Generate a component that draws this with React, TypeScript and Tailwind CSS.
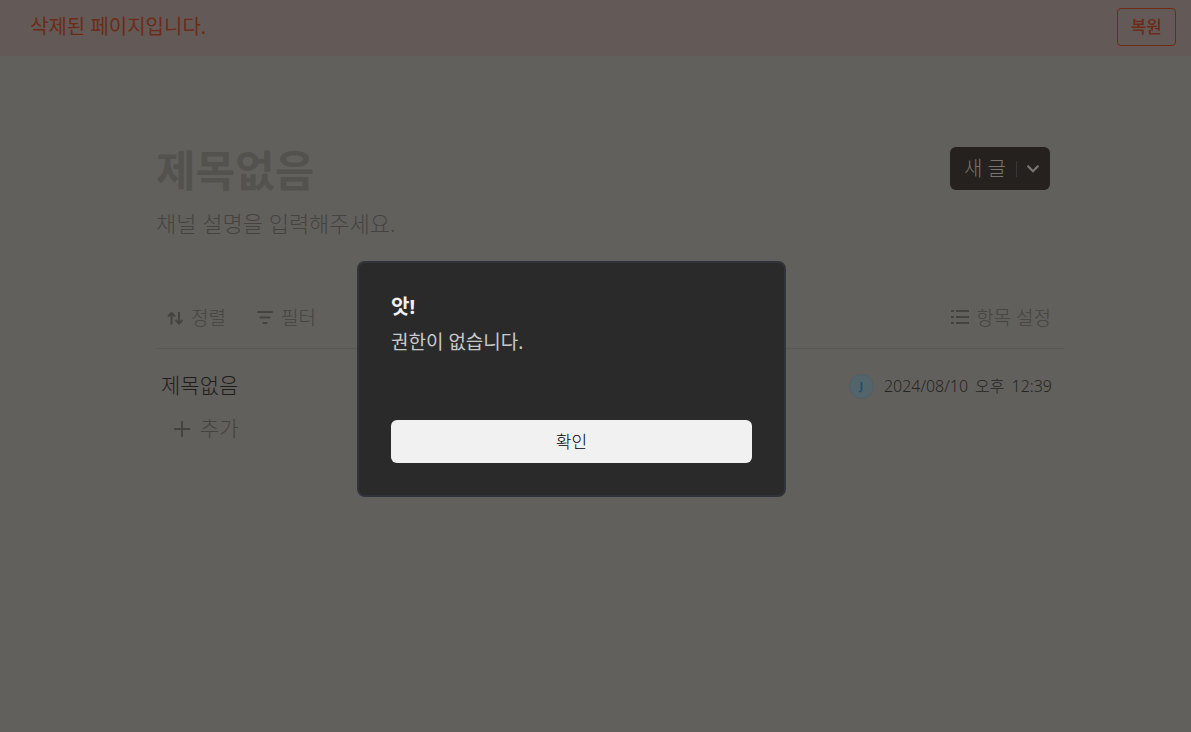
interface ToolButtonProps {
  label: string;
  children: React.ReactNode;
}

function ToolButton({ label, children }: ToolButtonProps) {
  return (
    <button type="button" className="flex items-center gap-[7px] text-[19px] text-[#454340]">
      {children}
      {label}
    </button>
  );
}

function SortIcon() {
  return (
    <svg width="18" height="18" viewBox="0 0 18 18" fill="none" stroke="currentColor" strokeWidth="2">
      <path d="M5.5 15.5V4M2 7.5 5.5 4 9 7.5M13 3v11.5M9.5 11l3.5 3.5 3.5-3.5" />
    </svg>
  );
}

function FilterIcon() {
  return (
    <svg width="18" height="18" viewBox="0 0 18 18" fill="none" stroke="currentColor" strokeWidth="2" strokeLinecap="round">
      <path d="M2 3h14M4.5 8.5h9M7.5 14h3" />
    </svg>
  );
}

function ListIcon() {
  return (
    <svg width="18" height="18" viewBox="0 0 18 18" fill="none" stroke="currentColor" strokeWidth="2">
      <path d="M0 2h3M0 8h3M0 14h3M5 2h13M5 8h13M5 14h13" />
    </svg>
  );
}

function Banner() {
  return (
    <div className="flex h-14 items-start justify-between bg-[#635a57] pt-2 pr-[15px] pl-[30px] text-[#6d2b17]">
      <p className="text-xl leading-[38px] font-normal">삭제된 페이지입니다.</p>
      <button type="button" className="h-[38px] rounded border border-[#6d2b17] px-[13px] text-[17px] font-medium">
        복원
      </button>
    </div>
  );
}

function PageHeader() {
  return (
    <header className="flex items-start justify-between pr-3.5">
      <div className="pt-0.5">
        <h1 className="text-[43px] leading-[48px] font-bold text-[#54524f]">제목없음</h1>
        <p className="mt-3 text-[22px] leading-8 text-[#454340]">채널 설명을 입력해주세요.</p>
      </div>
      <div className="mt-0.5 flex h-[43px] items-center rounded-md bg-[#24211e] text-[#777572]">
        <button type="button" className="h-full pr-2.5 pl-3.5 text-xl">
          새 글
        </button>
        <span className="h-4 w-px bg-[#393633]" />
        <button type="button" aria-label="더보기" className="flex h-full items-center px-2">
          <svg width="17" height="17" viewBox="0 0 16 16" fill="none" stroke="currentColor" strokeWidth="2" strokeLinecap="round">
            <path d="M3 6l4.5 4.5L12 6" />
          </svg>
        </button>
      </div>
    </header>
  );
}

function PostList() {
  return (
    <section>
      <div className="flex h-[63px] items-center justify-between border-b border-[#595753] pt-0.5 pr-[13px] pl-2.5">
        <div className="flex gap-[30px]">
          <ToolButton label="정렬">
            <SortIcon />
          </ToolButton>
          <ToolButton label="필터">
            <FilterIcon />
          </ToolButton>
        </div>
        <ToolButton label="항목 설정">
          <ListIcon />
        </ToolButton>
      </div>
      <div className="mt-4 flex h-[42px] items-center justify-between pr-3 pl-[5px]">
        <a href="#post" className="text-[21px] text-[#1f1d1a]">
          제목없음
        </a>
        <div className="flex items-center gap-2.5">
          <span className="flex size-[25px] items-center justify-center rounded-full border border-[#4b6069] bg-[#53646a] text-[11px] font-bold text-[#204f72]">
            J
          </span>
          <time className="flex gap-[7px] text-base text-[#262421]">
            <span>2024/08/10</span>
            <span>오후</span>
            <span>12:39</span>
          </time>
        </div>
      </div>
      <button type="button" className="ml-[18px] flex h-11 items-center gap-2.5 text-[21px] text-[#454340]">
        <svg width="16" height="16" viewBox="0 0 16 16" fill="none" stroke="currentColor" strokeWidth="2">
          <path d="M8 0v16M0 8h16" />
        </svg>
        추가
      </button>
    </section>
  );
}

function Alert() {
  return (
    <div className="fixed inset-0 flex items-center justify-center pt-[26px] pr-12">
      <div
        role="alertdialog"
        aria-labelledby="alert-title"
        aria-describedby="alert-message"
        className="w-full max-w-[429px] rounded-lg border-2 border-[#30333a] bg-[#2a2a2a] p-8 font-normal"
      >
        <h2 id="alert-title" className="text-xl leading-6 font-bold text-[#f1f1f1]">
          앗!
        </h2>
        <p id="alert-message" className="mt-2 text-[19px] leading-[30px] text-[#c9c9c9]">
          권한이 없습니다.
        </p>
        <button type="button" className="mt-[63px] h-[43px] w-full rounded-md bg-[#f1f1f1] text-[17px] font-light text-black">
          확인
        </button>
      </div>
    </div>
  );
}

export default function App() {
  return (
    <div className="min-h-screen bg-[#62605d] font-['Noto_Sans','Noto_Sans_CJK_KR',sans-serif] font-light">
      <Banner />
      <main className="pt-[89px] pr-[127px] pl-[156px]">
        <PageHeader />
        <div className="mt-[47px]">
          <PostList />
        </div>
      </main>
      <Alert />
    </div>
  );
}
